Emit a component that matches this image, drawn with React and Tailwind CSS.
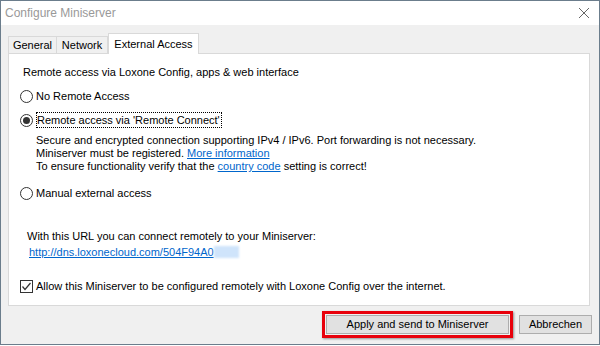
import React from 'react';

const font = { fontFamily: '"Liberation Sans", Arial, sans-serif' };

const Radio = ({ checked }) => (
    <span className="w-[13px] h-[13px] rounded-full border border-[#333] bg-white flex items-center justify-center shrink-0">
        {checked && <span className="w-[7px] h-[7px] rounded-full bg-[#333]" />}
    </span>
);

const App = () => {
    return (
        <div className="w-[600px] h-[346px] bg-white text-[11px] text-black overflow-hidden" style={font}>
            <div className="w-[600px] h-[345px] border border-[#6b7d8c] flex flex-col bg-[#f0f0f0]">
                {/* title bar */}
                <div className="h-[24px] bg-white flex items-center justify-between pl-[4px] pr-[8px] shrink-0">
                    <span className="text-[12px] text-[#999]">Configure Miniserver</span>
                    <svg width="12" height="12" viewBox="0 0 12 12" className="mr-[1px]">
                        <path d="M1 1 L11 11 M11 1 L1 11" stroke="#666" strokeWidth="1" />
                    </svg>
                </div>

                {/* tabs */}
                <div className="flex items-end pl-[7px] pt-[8px] h-[28px] shrink-0">
                    <div className="w-[49px] h-[17px] border border-b-0 border-[#d9d9d9] bg-[#f0f0f0] flex items-center justify-center">General</div>
                    <div className="w-[51px] h-[17px] border border-b-0 border-l-0 border-[#d9d9d9] bg-[#f0f0f0] flex items-center justify-center">Network</div>
                    <div className="w-[91px] h-[21px] border border-b-0 border-[#d9d9d9] bg-white flex items-center justify-center relative top-[1px]">External Access</div>
                </div>

                {/* panel */}
                <div className="mx-[7px] mr-[9px] h-[253px] bg-white border border-[#d9d9d9] flex flex-col pl-[11px] pt-[10px]">
                    <div className="leading-[16px] pl-[3px]">Remote access via Loxone Config, apps &amp; web interface</div>

                    <div className="flex items-center gap-[3px] mt-[8px] h-[16px]">
                        <Radio />
                        <span>No Remote Access</span>
                    </div>

                    <div className="flex items-center gap-[3px] mt-[8px] h-[16px]">
                        <Radio checked />
                        <span className="border border-dotted border-black leading-[14px] pr-[1px]">Remote access via 'Remote Connect'</span>
                    </div>

                    <div className="pl-[16px] mt-[6px] leading-[13px]">
                        <div>Secure and encrypted connection supporting IPv4 / IPv6. Port forwarding is not necessary.</div>
                        <div>Miniserver must be registered. <span className="text-[#0066cc] underline">More information</span></div>
                        <div>To ensure functionality verify that the <span className="text-[#0066cc] underline">country code</span> setting is correct!</div>
                    </div>

                    <div className="flex items-center gap-[3px] mt-[12px] h-[16px]">
                        <Radio />
                        <span>Manual external access</span>
                    </div>

                    <div className="pl-[7px] mt-[27px] leading-[16px]">
                        <div>With this URL you can connect remotely to your Miniserver:</div>
                        <div className="pl-[2px] flex items-center">
                            <span className="text-[#0066cc] underline">http://dns.loxonecloud.com/504F94A0</span>
                            <span className="w-[25px] h-[12px] bg-[#cfe4fb] blur-[1px]" />
                        </div>
                    </div>

                    <div className="flex items-center gap-[3px] mt-[18px] h-[16px]">
                        <span className="w-[13px] h-[13px] border border-[#333] bg-white flex items-center justify-center shrink-0">
                            <svg width="11" height="11" viewBox="0 0 11 11">
                                <path d="M1.5 5.5 L4 8.5 L9.5 2" stroke="#333" strokeWidth="1.2" fill="none" />
                            </svg>
                        </span>
                        <span>Allow this Miniserver to be configured remotely with Loxone Config over the internet.</span>
                    </div>
                </div>

                {/* buttons */}
                <div className="flex justify-end items-center gap-[6px] pr-[7px] mt-[5px]">
                    <div className="border-[3px] border-[#e8000b] p-[1px] shadow-[1px_1px_2px_rgba(0,0,0,0.4)]">
                        <div className="w-[183px] h-[19px] bg-[#e1e1e1] border border-[#adadad] flex items-center justify-center">
                            Apply and send to Miniserver
                        </div>
                    </div>
                    <div className="w-[73px] h-[19px] bg-[#e1e1e1] border border-[#adadad] flex items-center justify-center">
                        Abbrechen
                    </div>
                </div>
            </div>
        </div>
    );
};

export default App;
